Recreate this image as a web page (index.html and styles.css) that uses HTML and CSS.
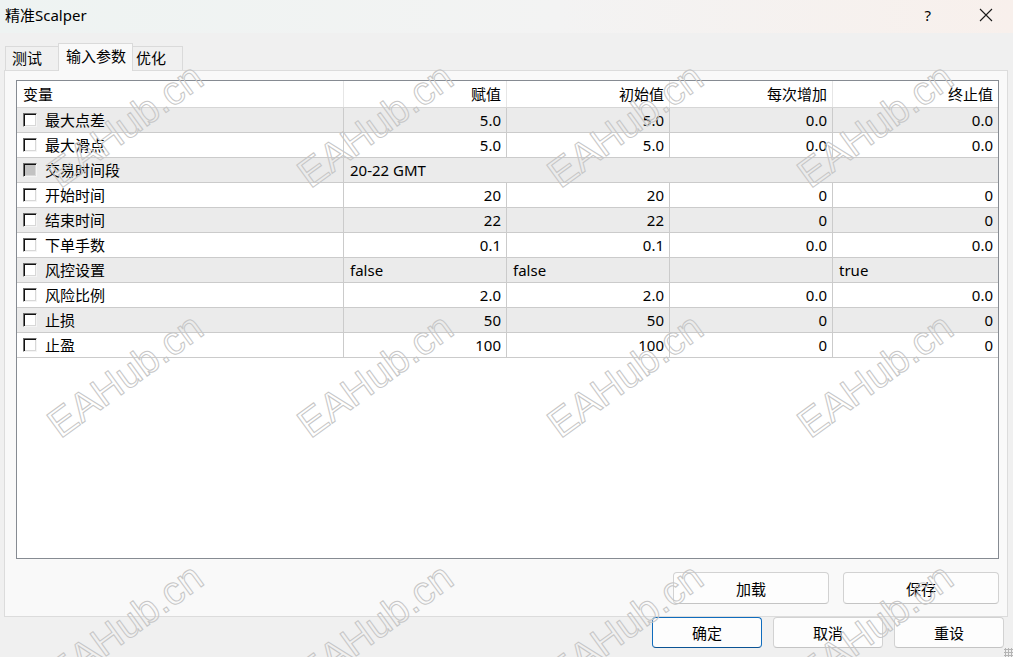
FILE: index.html
```html
<!DOCTYPE html>
<html lang="zh-CN">
<head>
  <meta charset="UTF-8">
  <title>精准Scalper</title>
  <link rel="stylesheet" href="styles.css">
</head>
<body>
  <div class="titlebar">
    <span class="title">精准Scalper</span>
    <span class="help">?</span>
    <svg class="close" width="14" height="14" viewBox="0 0 14 14">
      <path d="M1 1 L13 13 M13 1 L1 13" stroke="#1a1a1a" stroke-width="1.1" fill="none"/>
    </svg>
  </div>

  <div class="tabs">
    <div class="tab tab-test">测试</div>
    <div class="tab active">输入参数</div>
    <div class="tab tab-opt">优化</div>
  </div>

  <div class="panel">
    <div class="list">
      <div class="row head">
        <div class="c">变量</div>
        <div class="c r">赋值</div>
        <div class="c r">初始值</div>
        <div class="c r">每次增加</div>
        <div class="c r">终止值</div>
      </div>
      <div class="row odd">
        <div class="c name"><span class="cb"></span>最大点差</div>
        <div class="c r">5.0</div><div class="c r">5.0</div><div class="c r">0.0</div><div class="c r">0.0</div>
      </div>
      <div class="row">
        <div class="c name"><span class="cb"></span>最大滑点</div>
        <div class="c r">5.0</div><div class="c r">5.0</div><div class="c r">0.0</div><div class="c r">0.0</div>
      </div>
      <div class="row odd">
        <div class="c name"><span class="cb mixed"></span>交易时间段</div>
        <div class="c wide">20-22 GMT</div>
      </div>
      <div class="row">
        <div class="c name"><span class="cb"></span>开始时间</div>
        <div class="c r">20</div><div class="c r">20</div><div class="c r">0</div><div class="c r">0</div>
      </div>
      <div class="row odd">
        <div class="c name"><span class="cb"></span>结束时间</div>
        <div class="c r">22</div><div class="c r">22</div><div class="c r">0</div><div class="c r">0</div>
      </div>
      <div class="row">
        <div class="c name"><span class="cb"></span>下单手数</div>
        <div class="c r">0.1</div><div class="c r">0.1</div><div class="c r">0.0</div><div class="c r">0.0</div>
      </div>
      <div class="row odd">
        <div class="c name"><span class="cb"></span>风控设置</div>
        <div class="c">false</div><div class="c">false</div><div class="c"></div><div class="c">true</div>
      </div>
      <div class="row">
        <div class="c name"><span class="cb"></span>风险比例</div>
        <div class="c r">2.0</div><div class="c r">2.0</div><div class="c r">0.0</div><div class="c r">0.0</div>
      </div>
      <div class="row odd">
        <div class="c name"><span class="cb"></span>止损</div>
        <div class="c r">50</div><div class="c r">50</div><div class="c r">0</div><div class="c r">0</div>
      </div>
      <div class="row">
        <div class="c name"><span class="cb"></span>止盈</div>
        <div class="c r">100</div><div class="c r">100</div><div class="c r">0</div><div class="c r">0</div>
      </div>
    </div>

    <div class="panel-buttons">
      <button class="btn wide-btn">加载</button>
      <button class="btn wide-btn">保存</button>
    </div>
  </div>

  <div class="dialog-buttons">
    <button class="btn default">确定</button>
    <button class="btn">取消</button>
    <button class="btn">重设</button>
  </div>

  <div class="grip"></div>

  <div class="watermark">
    <span>EAHub.cn</span><span>EAHub.cn</span><span>EAHub.cn</span><span>EAHub.cn</span>
    <span>EAHub.cn</span><span>EAHub.cn</span><span>EAHub.cn</span><span>EAHub.cn</span>
    <span>EAHub.cn</span><span>EAHub.cn</span><span>EAHub.cn</span><span>EAHub.cn</span>
  </div>
</body>
</html>
```

FILE: styles.css
```css
html, body {
  margin: 0;
  padding: 0;
}
body {
  width: 1013px;
  height: 657px;
  overflow: hidden;
  position: relative;
  background: #f0f0f0;
  font-family: "Noto Sans", "Noto Sans CJK SC", sans-serif;
  font-size: 15px;
  color: #000;
}

/* title bar */
.titlebar {
  height: 33px;
  display: flex;
  align-items: center;
  padding-left: 5px;
  background: linear-gradient(90deg, #eef3f2 0%, #f3f3f3 55%, #f8f0ec 100%);
}
.title {
  line-height: 20px;
  margin-top: -4px;
}
.help {
  margin-left: auto;
  margin-right: 48px;
  margin-top: -4px;
  font-size: 15px;
}
.close {
  margin-right: 20px;
  margin-top: -4px;
}

/* tabs */
.tabs {
  height: 37px;
  display: flex;
  align-items: flex-end;
  padding-left: 5px;
  position: relative;
  z-index: 1;
}
.tab {
  box-sizing: border-box;
  height: 24px;
  line-height: 22px;
  border: 1px solid #dadada;
  border-bottom: none;
  background: #f0f0f0;
}
.tab-test {
  width: 53px;
  padding-left: 6px;
  border-right: none;
}
.tab.active {
  width: 75px;
  height: 28px;
  line-height: 24px;
  padding-left: 7px;
  background: #f9f9f9;
  margin-bottom: -1px;
}
.tab-opt {
  width: 50px;
  padding-left: 3px;
  border-left: none;
}

/* tab page */
.panel {
  box-sizing: border-box;
  margin-left: 4px;
  width: 1004px;
  height: 547px;
  background: #f9f9f9;
  border: 1px solid #dcdcdc;
  padding: 9px 0 0 11px;
}
.list {
  box-sizing: border-box;
  width: 983px;
  height: 479px;
  border: 1px solid #868b92;
  background: #fff;
}
.row {
  box-sizing: border-box;
  display: grid;
  grid-template-columns: 327px 163px 163px 163px 165px;
  height: 25px;
  border-bottom: 1px solid #cbcbcb;
}
.row.head {
  height: 27px;
  border-bottom-color: #d6d6d6;
}
.row.odd {
  background: #ebebeb;
}
.c {
  box-sizing: border-box;
  border-right: 1px solid #cbcbcb;
  padding: 0 6px;
  line-height: 24px;
  white-space: nowrap;
  overflow: hidden;
}
.c:last-child {
  border-right: none;
}
.head .c {
  border-right-color: #e6e6e6;
  line-height: 26px;
}
.c.r {
  text-align: right;
  padding-right: 5px;
}
.c.wide {
  grid-column: 2 / 6;
}
.c.name {
  display: flex;
  align-items: center;
  gap: 8px;
}
.cb {
  box-sizing: border-box;
  width: 14px;
  height: 14px;
  flex: none;
  background: #fff;
  border: 1px solid;
  border-color: #6e6e6e #f4f4f4 #f4f4f4 #6e6e6e;
  box-shadow: inset 1px 1px 0 #111, inset -1px -1px 0 #d8d8d8;
}
.cb.mixed {
  background: #c2c2c2;
}

/* buttons */
.btn {
  box-sizing: border-box;
  height: 32px;
  font-family: inherit;
  font-size: 15px;
  color: #000;
  background: #fdfdfd;
  border: 1px solid #d2d2d2;
  border-bottom-color: #c4c4c4;
  border-radius: 4px;
  padding: 0;
}
.panel-buttons {
  display: flex;
  gap: 14px;
  margin-top: 13px;
  padding-left: 657px;
}
.wide-btn {
  width: 156px;
}
.dialog-buttons {
  display: flex;
  gap: 11px;
  padding-left: 652px;
}
.dialog-buttons .btn {
  width: 110px;
  height: 31px;
}
.btn.default {
  border: 1px solid #0f6cbd;
  border-bottom-color: #0b5394;
}

/* size grip */
.grip {
  position: absolute;
  right: 0;
  bottom: 0;
  width: 9px;
  height: 9px;
  background: radial-gradient(circle, #b5b5b5 1px, transparent 1.2px) 0 0 / 3px 3px;
}

/* watermark layer, clipped to the window */
.watermark {
  position: absolute;
  left: 0;
  top: 0;
  width: 1013px;
  height: 657px;
  overflow: hidden;
  display: grid;
  grid-template-columns: repeat(4, 250px);
  grid-auto-rows: 250px;
  pointer-events: none;
}
.watermark span {
  display: flex;
  align-items: center;
  justify-content: center;
  transform: rotate(-36deg);
  font-family: "Liberation Sans", sans-serif;
  font-size: 40px;
  color: transparent;
  -webkit-text-stroke: 1px #c6c6c6;
}
```
